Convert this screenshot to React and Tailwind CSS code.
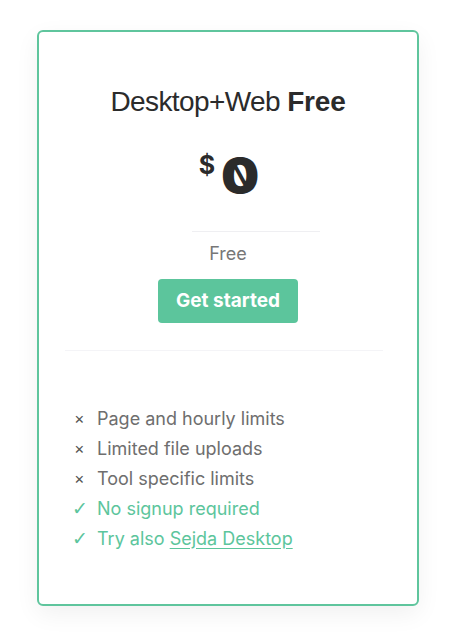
const features = [
  { ok: false, text: 'Page and hourly limits' },
  { ok: false, text: 'Limited file uploads' },
  { ok: false, text: 'Tool specific limits' },
  { ok: true, text: 'No signup required' },
  { ok: true, text: 'Try also ', link: 'Sejda Desktop' },
];

export default function App() {
  return (
    <div className="min-h-[633px] w-[450px] bg-white pt-[30px] font-['Inter',sans-serif]">
      <div className="mx-[37px] h-[576px] w-[382px] rounded-md border-2 border-[#5fc59d] bg-white shadow-[0_8px_24px_rgba(0,0,0,0.06)]">
        <h2 className="mt-[52px] text-center font-['Liberation_Sans',Arial,sans-serif] text-[28px] leading-[36px] tracking-[-0.6px] text-[#2b2b2b]">
          Desktop+Web <span className="font-bold tracking-[-0.2px]">Free</span>
        </h2>

        <div className="mt-[26px] flex h-[60px] items-start justify-center text-[#2b2b2b]">
          <span className="mr-[8px] mt-[4px] text-[25px] font-bold leading-[30px]">$</span>
          <span className="inline-block scale-x-[-1.12] text-[48px] font-black leading-[60px] slashed-zero">0</span>
        </div>

        <div className="ml-[153px] mt-[25px] h-px w-[128px] bg-[#efeff2]" />

        <p className="mt-[11px] text-center text-[18px] leading-[22px] text-[#777]">Free</p>

        <div className="mt-[14px] flex justify-center">
          <button className="h-[44px] w-[140px] rounded-[4px] bg-[#5cc59c] text-[19px] font-bold text-white">
            Get started
          </button>
        </div>

        <div className="ml-[26px] mt-[27px] h-px w-[318px] bg-[#f4f4f7]" />

        <ul className="mt-[52px] pl-[33px]">
          {features.map((f) => (
            <li
              key={f.text}
              className={`flex h-[30px] items-center text-[18px] ${f.ok ? 'text-[#5cc59c]' : 'text-[#6e6e6e]'}`}
            >
              <span
                className={`w-[25px] ${
                  f.ok ? "font-['DejaVu_Sans',sans-serif] text-[19px] font-bold" : 'pl-[2px] text-[16px] text-[#555]'
                }`}
              >
                {f.ok ? '✓' : '×'}
              </span>
              <span>
                {f.text}
                {f.link && <a className="underline underline-offset-[3px]" href="#">{f.link}</a>}
              </span>
            </li>
          ))}
        </ul>
      </div>
    </div>
  );
}
